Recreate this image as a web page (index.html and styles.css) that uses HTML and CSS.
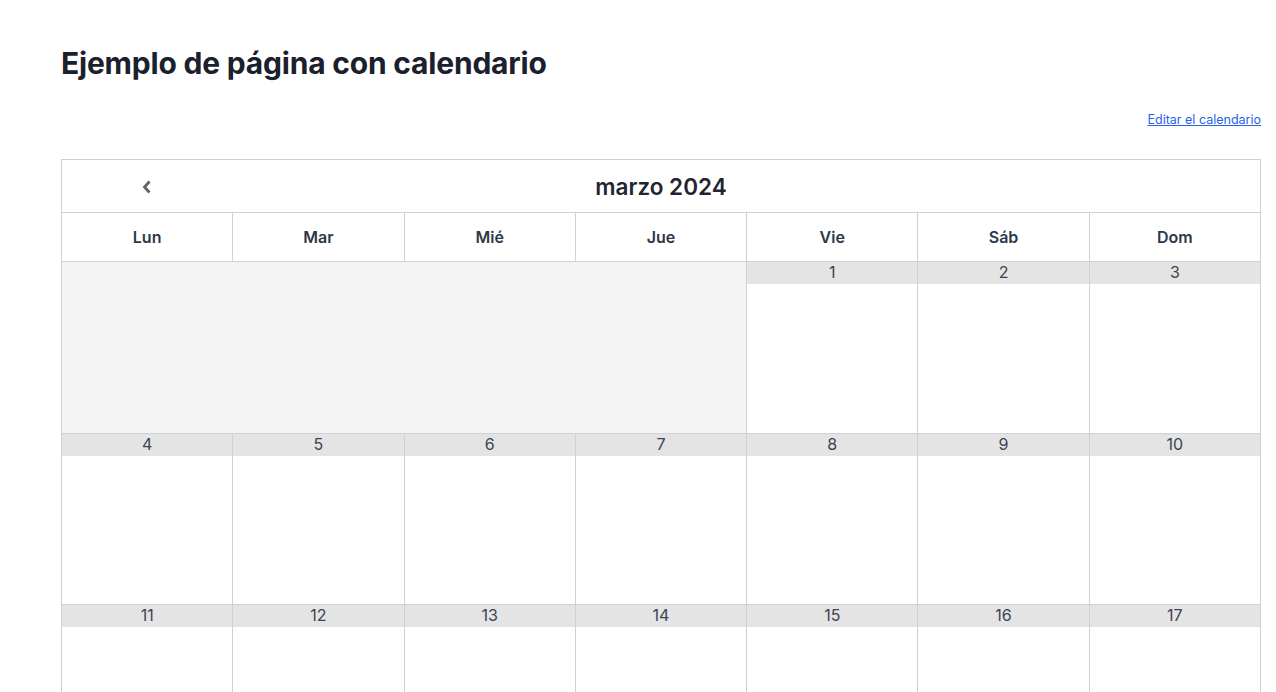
FILE: index.html
```html
<!DOCTYPE html>
<html lang="es">
<head>
<meta charset="utf-8">
<title>Ejemplo de página con calendario</title>
<link rel="stylesheet" href="styles.css">
</head>
<body>
<main class="page">
  <h1 class="title">Ejemplo de página con calendario</h1>
  <div class="actions"><a class="edit-link" href="#">Editar el calendario</a></div>
  <table class="cal">
    <thead>
      <tr class="cal-nav">
        <th class="nav-prev"><svg width="12" height="16" viewBox="0 0 12 16"><path d="M8.5 2.5 L3.5 8 L8.5 13.5" fill="none" stroke="#5f6368" stroke-width="2.8" stroke-linecap="butt" stroke-linejoin="miter"/></svg></th>
        <th class="month" colspan="5">marzo 2024</th>
        <th class="nav-next"></th>
      </tr>
      <tr class="weekdays">
        <th>Lun</th><th>Mar</th><th>Mié</th><th>Jue</th><th>Vie</th><th>Sáb</th><th>Dom</th>
      </tr>
    </thead>
    <tbody>
      <tr class="week">
        <td class="empty" colspan="4"></td>
        <td class="day"><div class="num">1</div></td>
        <td class="day"><div class="num">2</div></td>
        <td class="day"><div class="num">3</div></td>
      </tr>
      <tr class="week">
        <td class="day"><div class="num">4</div></td>
        <td class="day"><div class="num">5</div></td>
        <td class="day"><div class="num">6</div></td>
        <td class="day"><div class="num">7</div></td>
        <td class="day"><div class="num">8</div></td>
        <td class="day"><div class="num">9</div></td>
        <td class="day"><div class="num">10</div></td>
      </tr>
      <tr class="week">
        <td class="day"><div class="num">11</div></td>
        <td class="day"><div class="num">12</div></td>
        <td class="day"><div class="num">13</div></td>
        <td class="day"><div class="num">14</div></td>
        <td class="day"><div class="num">15</div></td>
        <td class="day"><div class="num">16</div></td>
        <td class="day"><div class="num">17</div></td>
      </tr>
    </tbody>
  </table>
</main>
</body>
</html>
```

FILE: styles.css
```css
html, body {
  margin: 0;
  padding: 0;
  background: #ffffff;
}

body {
  font-family: Inter, "Noto Sans", "Liberation Sans", sans-serif;
  color: #1a202c;
}

.page {
  width: 1200px;
  margin-left: 61px;
  padding-top: 44px;
}

.title {
  margin: 0;
  font-size: 30px;
  line-height: 38px;
  font-weight: 700;
  color: #1a202c;
  letter-spacing: -0.2px;
}

.actions {
  display: flex;
  justify-content: flex-end;
  margin-top: 30px;
}

.edit-link {
  font-size: 12.5px;
  line-height: 16px;
  color: #2563eb;
  text-decoration: underline;
}

.cal {
  margin-top: 31px;
  width: 1200px;
  border-collapse: collapse;
  table-layout: fixed;
  border: 1px solid #cdd1d9;
}

.cal th, .cal td {
  border: 1px solid #cdd1d9;
  padding: 0;
}

.cal-nav th {
  height: 52px;
  border-left: none;
  border-right: none;
}

.cal-nav .nav-prev {
  text-align: center;
  vertical-align: middle;
  border-left: 1px solid #cdd1d9;
}

.cal-nav .nav-prev svg {
  display: inline-block;
  vertical-align: middle;
  margin-top: -2px;
}

.cal-nav .nav-next {
  border-right: 1px solid #cdd1d9;
}

.month {
  font-size: 22.5px;
  font-weight: 600;
  color: #1f2532;
  text-align: center;
}

.weekdays th {
  height: 48px;
  font-size: 16px;
  font-weight: 600;
  color: #2d3748;
  text-align: center;
}

.week td {
  height: 170.5px;
  vertical-align: top;
}

.empty {
  background: #f4f4f4;
}

.num {
  background: #e4e4e4;
  height: 22px;
  line-height: 20px;
  text-align: center;
  font-size: 16px;
  color: #3b4351;
}
```
